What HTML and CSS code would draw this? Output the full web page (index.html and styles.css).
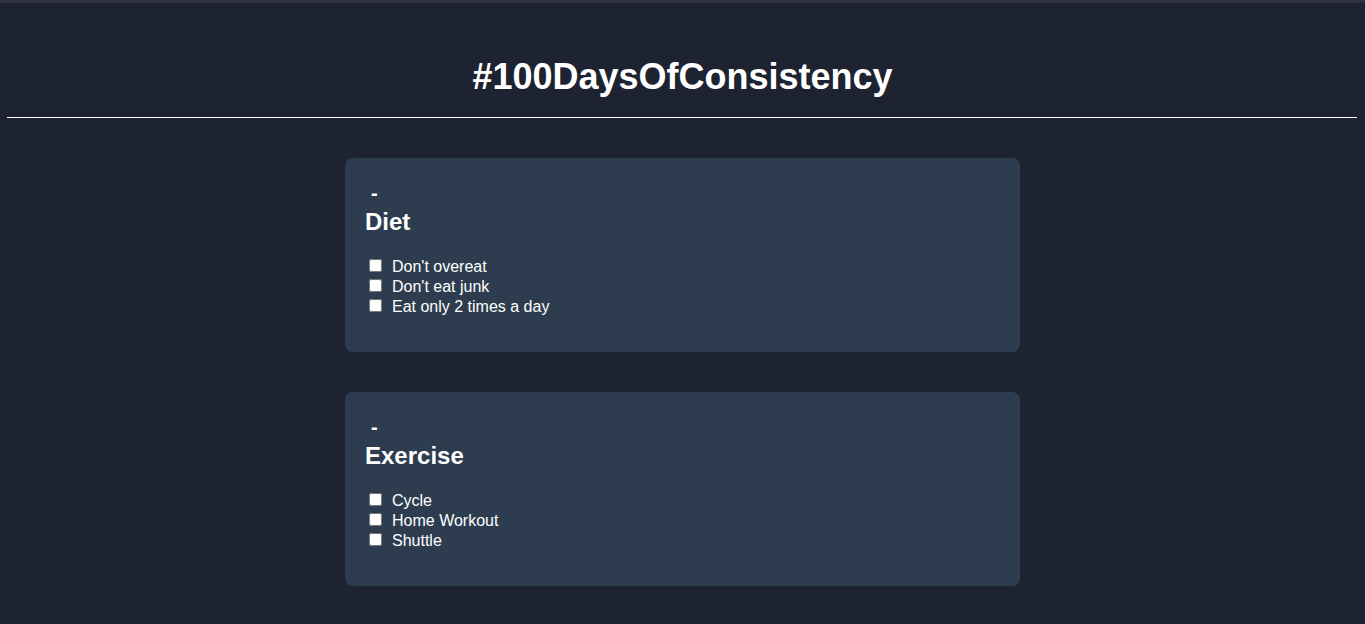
FILE: index.html
```html
<!DOCTYPE html>
<html>
<head>
<meta charset="utf-8">
<link rel="stylesheet" href="styles.css">
</head>
<body>
<div class="topbar"></div>
<header class="header">
  <h1 class="title">#100DaysOfConsistency</h1>
</header>
<div class="rule"></div>
<main class="cards">
  <section class="card">
    <div class="dash">-</div>
    <h2 class="card-title">Diet</h2>
    <ul class="tasks">
      <li class="task"><input type="checkbox" class="check"><span>Don't overeat</span></li>
      <li class="task"><input type="checkbox" class="check"><span>Don't eat junk</span></li>
      <li class="task"><input type="checkbox" class="check"><span>Eat only 2 times a day</span></li>
    </ul>
  </section>
  <section class="card">
    <div class="dash">-</div>
    <h2 class="card-title">Exercise</h2>
    <ul class="tasks">
      <li class="task"><input type="checkbox" class="check"><span>Cycle</span></li>
      <li class="task"><input type="checkbox" class="check"><span>Home Workout</span></li>
      <li class="task"><input type="checkbox" class="check"><span>Shuttle</span></li>
    </ul>
  </section>
</main>
</body>
</html>
```
FILE: styles.css
```css
html, body {
  margin: 0;
  padding: 0;
  background: #1e2332;
  color: #ffffff;
  font-family: "Liberation Sans", Arial, sans-serif;
  height: 100%;
  overflow: hidden;
}
.topbar {
  height: 3px;
  background: #2f3242;
}
.header {
  display: flex;
  justify-content: center;
  padding-top: 53px;
}
.title {
  margin: 0;
  font-size: 36px;
  line-height: 42px;
  font-weight: bold;
}
.rule {
  margin: 19px 8px 0 7px;
  height: 1px;
  background: #ffffff;
}
.cards {
  display: flex;
  flex-direction: column;
  align-items: center;
  gap: 40px;
  padding-top: 40px;
}
.card {
  width: 675px;
  height: 194px;
  box-sizing: border-box;
  background: #2d3d4f;
  border-radius: 8px;
  padding: 26px 20px 0 20px;
}
.dash {
  font-size: 20px;
  font-weight: bold;
  line-height: 18px;
  padding-left: 6px;
}
.card-title {
  margin: 6px 0 0 0;
  font-size: 24px;
  line-height: 28px;
  font-weight: bold;
}
.tasks {
  list-style: none;
  margin: 21px 0 0 0;
  padding: 0;
}
.task {
  display: flex;
  align-items: center;
  font-size: 16px;
  line-height: 20px;
}
.check {
  width: 13px;
  height: 13px;
  margin: -4px 10px 0 4px;
}
```
